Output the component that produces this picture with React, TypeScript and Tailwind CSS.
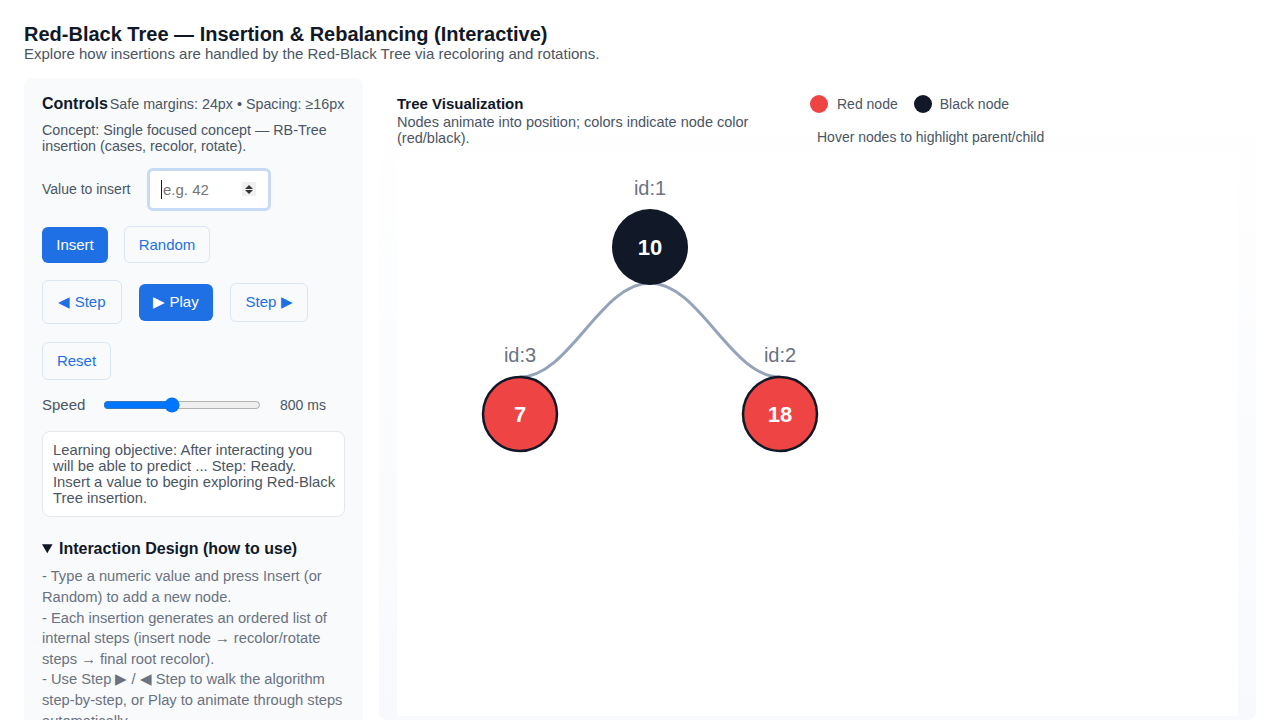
const nodes = [
  { id: 1, value: 10, color: 'black', x: 253, y: 91 },
  { id: 3, value: 7, color: 'red', x: 123, y: 258 },
  { id: 2, value: 18, color: 'red', x: 383, y: 258 },
];

const edges = [
  { from: 1, to: 3 },
  { from: 1, to: 2 },
];

const instructions = [
  '- Type a numeric value and press Insert (or Random) to add a new node.',
  '- Each insertion generates an ordered list of internal steps (insert node → recolor/rotate steps → final root recolor).',
  '- Use Step ▶ / ◀ Step to walk the algorithm step-by-step, or Play to animate through steps automatically.',
];

function edgePath(a: { x: number; y: number }, b: { x: number; y: number }) {
  const r = 38;
  const sy = a.y + r - 2;
  const ey = b.y - r + 1;
  const dx = b.x - a.x;
  return `M ${a.x} ${sy} C ${a.x + dx * 0.38} ${sy}, ${a.x + dx * 0.62} ${ey}, ${b.x} ${ey}`;
}

function TreeCanvas() {
  const byId = (id: number) => nodes.find((n) => n.id === id)!;
  return (
    <svg width={841} height={560} className="block bg-white">
      {edges.map((e) => (
        <path
          key={`${e.from}-${e.to}`}
          d={edgePath(byId(e.from), byId(e.to))}
          fill="none"
          stroke="#94a3b8"
          strokeWidth={3}
        />
      ))}
      {nodes.map((n) => (
        <g key={n.id}>
          <text
            x={n.x}
            y={n.y - 52}
            textAnchor="middle"
            fontSize={20}
            fill="#6b7280"
            fontFamily="'Liberation Sans', Arial, sans-serif"
          >
            id:{n.id}
          </text>
          <circle
            cx={n.x}
            cy={n.y}
            r={n.color === 'red' ? 37 : 38}
            fill={n.color === 'red' ? '#ef4444' : '#111827'}
            stroke="#111827"
            strokeWidth={n.color === 'red' ? 2.5 : 0}
          />
          <text
            x={n.x}
            y={n.y + 8}
            textAnchor="middle"
            fontSize={22}
            fontWeight={700}
            fill="#ffffff"
            fontFamily="'Liberation Sans', Arial, sans-serif"
          >
            {n.value}
          </text>
        </g>
      ))}
    </svg>
  );
}

const outlineBtn =
  'flex items-center justify-center rounded-md border border-[#dbe6f5] bg-[#f8fafc] text-[15px] text-[#1f6fe5]';
const solidBtn = 'flex items-center justify-center rounded-md bg-[#1f6fe5] text-[15px] text-white';

export default function App() {
  return (
    <div className="min-h-[720px] bg-white px-6 pt-[22px] font-['Liberation_Sans',Arial,sans-serif] text-[#111827]">
      <h1 className="text-[20px] font-bold leading-[24px]">
        Red-Black Tree — Insertion &amp; Rebalancing (Interactive)
      </h1>
      <p className="text-[15px] leading-4 text-[#4b5563]">
        Explore how insertions are handled by the Red-Black Tree via recoloring and rotations.
      </p>

      <div className="mt-[16px] flex gap-4">
        {/* controls */}
        <aside className="w-[339px] shrink-0 rounded-lg bg-[#f8fafc] px-[18px] pb-6 pt-4">
          <div className="flex items-baseline gap-[2px]">
            <h2 className="text-[16px] font-bold leading-5">Controls</h2>
            <span className="text-[14.3px] text-[#4b5563]">Safe margins: 24px • Spacing: ≥16px</span>
          </div>
          <p className="mt-[7px] text-[14.3px] leading-4 text-[#4b5563]">
            Concept: Single focused concept — RB-Tree insertion (cases, recolor, rotate).
          </p>

          <div className="mt-[14px] flex items-center">
            <label className="w-[105px] text-[14px] text-[#4b5563]">Value to insert</label>
            <div className="relative">
              <input
                type="text"
                placeholder="e.g. 42"
                className="h-[43px] w-[124px] rounded-md border-[3px] border-[#c7dbf6] bg-white pl-[13px] text-[15px] text-[#111827] outline-none placeholder:text-[#757575]"
              />
              <span className="pointer-events-none absolute left-[14px] top-[12px] h-[19px] w-px bg-[#111827]" />
              <span className="pointer-events-none absolute right-[15px] top-[14px] flex h-[14px] w-[14px] flex-col items-center justify-center gap-[1px] bg-[#f0f0f0]">
                <svg width="8" height="4" viewBox="0 0 8 4">
                  <path d="M0 4 L4 0 L8 4 Z" fill="#333" />
                </svg>
                <svg width="8" height="4" viewBox="0 0 8 4">
                  <path d="M0 0 L4 4 L8 0 Z" fill="#333" />
                </svg>
              </span>
            </div>
          </div>

          <div className="mt-[15px] flex items-center gap-4">
            <button className={`${solidBtn} h-9 w-[66px]`}>Insert</button>
            <button className={`${outlineBtn} h-[37px] w-[86px]`}>Random</button>
          </div>

          <div className="mt-[17px] flex items-center gap-[17px]">
            <button className={`${outlineBtn} h-[44px] w-[80px]`}>◀ Step</button>
            <button className={`${solidBtn} h-[37px] w-[74px]`}>▶ Play</button>
            <button className={`${outlineBtn} h-[39px] w-[78px]`}>Step ▶</button>
          </div>

          <div className="mt-[18px]">
            <button className={`${outlineBtn} h-[38px] w-[69px]`}>Reset</button>
          </div>

          <div className="mt-[15px] flex h-5 items-center">
            <span className="w-[61px] text-[15px] text-[#4b5563]">Speed</span>
            <input type="range" min={200} max={1600} defaultValue={800} className="m-0 w-[158px]" />
            <span className="ml-[19px] text-[14px] text-[#4b5563]">800 ms</span>
          </div>

          <div className="mt-4 whitespace-nowrap rounded-lg border border-[#e5e7eb] bg-white py-[10px] pl-[10px] pr-[4px] text-[14.8px] leading-4 text-[#4b5563]">
            Learning objective: After interacting you
            <br />
            will be able to predict ... Step: Ready.
            <br />
            Insert a value to begin exploring Red-Black
            <br />
            Tree insertion.
          </div>

          <details open className="mt-[22px]">
            <summary className="cursor-pointer text-[16px] font-bold leading-5 text-[#111827]">
              Interaction Design (how to use)
            </summary>
            <div className="mt-[7px] -mr-[2px] text-[14.7px] leading-[20.6px] text-[#6b7280]">
              {instructions.map((line) => (
                <p key={line}>{line}</p>
              ))}
            </div>
          </details>
        </aside>

        {/* visualization */}
        <section className="h-[642px] flex-1 overflow-hidden rounded-lg bg-gradient-to-b from-white to-[#f7f9fc] px-[18px] pt-4">
          <div className="flex">
            <div className="w-[413px] shrink-0">
              <h2 className="text-[15px] font-bold leading-5">Tree Visualization</h2>
              <p className="text-[14.5px] leading-4 text-[#4b5563]">
                Nodes animate into position; colors indicate node color (red/black).
              </p>
            </div>
            <div>
              <div className="flex h-5 items-center text-[14px] text-[#4b5563]">
                <span className="h-[18px] w-[18px] rounded-full bg-[#ef4444]" />
                <span className="ml-[9px]">Red node</span>
                <span className="ml-4 h-[18px] w-[18px] rounded-full bg-[#111827]" />
                <span className="ml-2">Black node</span>
              </div>
              <p className="mt-[15px] pl-[7px] text-[14px] leading-4 text-[#4b5563]">
                Hover nodes to highlight parent/child
              </p>
            </div>
          </div>
          <div className="mt-[10px]">
            <TreeCanvas />
          </div>
        </section>
      </div>
    </div>
  );
}
